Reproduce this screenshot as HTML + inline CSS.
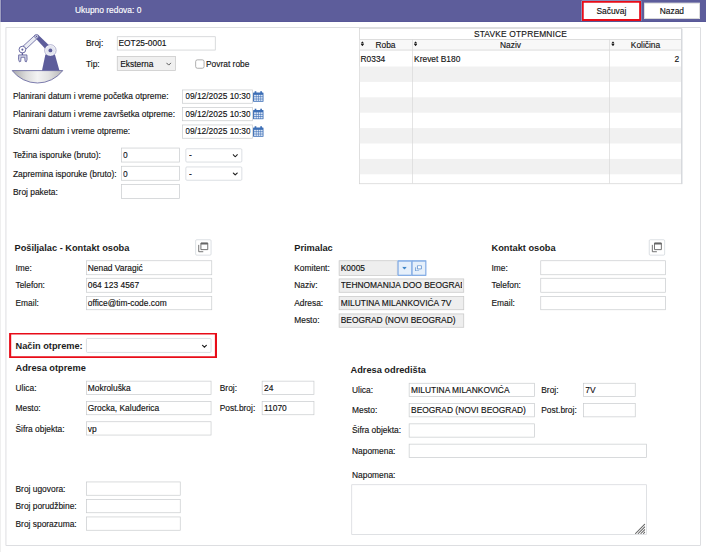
<!DOCTYPE html>
<html><head><meta charset="utf-8">
<style>
*{box-sizing:border-box;margin:0;padding:0}
html,body{width:706px;height:552px;overflow:hidden;background:#fff}
body{font-family:"Liberation Sans",sans-serif;color:#1c1c1c}
#w{position:absolute;left:0;top:0;width:1008.57px;height:788.57px;transform:scale(0.7);transform-origin:0 0}
.a{position:absolute;white-space:nowrap}
.l{font-size:12px;line-height:18px;height:18px;color:#151515;-webkit-text-stroke:0.2px}
.t{color:#111;overflow:hidden}
.h{font-size:13.2px;line-height:19px;height:19px;font-weight:bold;color:#1c1c1c}
.i{border:1px solid #c8cbce;background:#fff}
.g{background:#eeeeee;border-color:#c9c9c9}
.s{border-radius:3px}
</style></head><body><div id="w">
<div class="a" style="left:0.0px;top:0.0px;width:1.43px;height:788.57px;background:#e8e8e8"></div>
<div class="a" style="left:1.43px;top:0.0px;width:1007.14px;height:31.43px;background:#5d5d9b;border-bottom:1px solid #43438a;border-left:1px solid #4a4a90"></div>
<div class="a l" style="left:107.14px;top:6px;color:#fff">Ukupno redova: 0</div>
<div class="a" style="left:831.29px;top:1.29px;width:84.29px;height:28.43px;background:#fff;box-shadow:inset 0 0 0 2.9px #e80c18"></div>
<div class="a l" style="left:831.29px;top:7px;width:84.29px;text-align:center;color:#111">Sačuvaj</div>
<div class="a" style="left:919.64px;top:4.29px;width:80.36px;height:22.86px;background:#fff;border:1px solid #cfcfcf"></div>
<div class="a l" style="left:919.64px;top:7px;width:80.36px;text-align:center;color:#111">Nazad</div>
<div class="a" style="left:8.14px;top:38.86px;width:993.14px;height:741.57px;border:1px solid #cfd1d4;background:#fff"></div>
<svg class="a" style="left:15.71px;top:47.14px" width="75.71" height="75.71" viewBox="0 0 53 53"><defs><linearGradient id="bg" x1="0" x2="1"><stop offset="0" stop-color="#a9a9a9"/><stop offset=".28" stop-color="#dcdcdc"/><stop offset=".5" stop-color="#f3f3f3"/><stop offset=".72" stop-color="#e2e2e2"/><stop offset="1" stop-color="#b6b6b6"/></linearGradient></defs><path d="M1 37.7 H51.6 A32 32 0 0 1 1 37.7 Z" fill="url(#bg)" stroke="#5d5d9b" stroke-width="0.8"/><path d="M30.8 37.7 L34.2 21.5 H43.7 L48.2 37.7 Z" fill="#5d5d9b"/><path d="M26.9 1.9 L41.2 15.6 L37.2 19.4 L23.9 4.9 Z" fill="#5d5d9b"/><path d="M26.8 4.9 L24.1 2.0 L9.8 15.2 L12.6 18.2 Z" fill="#e9ebf3" stroke="#5d5d9b" stroke-width="0.8"/><circle cx="25.4" cy="3.5" r="1.9" fill="#e9ebf3" stroke="#5d5d9b" stroke-width="0.8"/><circle cx="25.4" cy="3.5" r="0.8" fill="#5d5d9b"/><circle cx="39.2" cy="17.5" r="5.7" fill="#fff" stroke="#5d5d9b" stroke-width="0.5"/><circle cx="39.2" cy="17.5" r="4.7" fill="#e3e5ef"/><circle cx="39.2" cy="17.5" r="1.9" fill="#5d5d9b"/><circle cx="11.2" cy="16.7" r="3.35" fill="#fff" stroke="#5d5d9b" stroke-width="0.9"/><circle cx="11.2" cy="16.7" r="1.05" fill="#5d5d9b"/><path d="M11.2 19.9 V22.2" stroke="#5d5d9b" stroke-width="1.3" fill="none"/><path d="M7.5 22 H15.7 L15.9 26.6 L15.1 29 L13.9 28.5 L13.5 24.4 H9.9 L9.5 28.5 L8.3 29 L7.3 26.6 Z" fill="#cfd1e3" stroke="#5d5d9b" stroke-width="0.8" stroke-linejoin="round"/></svg>
<div class="a l" style="left:122.86px;top:53px;">Broj:</div>
<div class="a l" style="left:122.86px;top:83px;">Tip:</div>
<div class="a i" style="left:167.14px;top:51.79px;width:141.07px;height:20.36px;"></div>
<div class="a l t" style="left:169.14px;top:53px;width:135.87px">EOT25-0001</div>
<div class="a i s" style="left:167.14px;top:80.0px;width:84.29px;height:21.43px;background:#f0f0f0;border-color:#c6c6c6;border-radius:0"><svg class="a" style="right:5.2px;top:50%;margin-top:-1.7px" width="8.1" height="5" viewBox="0 0 7.4 4.6"><path d="M0.6 0.6 L3.7 3.7 L6.8 0.6" fill="none" stroke="#444" stroke-width="1.15"/></svg></div>
<div class="a l t" style="left:171.74px;top:83px;width:76.49px">Eksterna</div>
<div class="a" style="left:278.57px;top:84.71px;width:13.29px;height:13.57px;border:1px solid #8c8c8c;border-radius:3px;background:#fff"></div>
<div class="a l" style="left:294.29px;top:83px;">Povrat robe</div>
<div class="a l" style="left:18.57px;top:128px;">Planirani datum i vreme početka otpreme:</div>
<div class="a i" style="left:260.36px;top:127.5px;width:100.36px;height:20.5px;"></div>
<div class="a l t" style="left:264.66px;top:128px;width:92.86px">09/12/2025 10:30</div>
<div class="a" style="left:360.86px;top:129.29px"><svg width="16" height="17" viewBox="0 0 16 17"><rect x="0.5" y="3" width="15" height="13.5" rx="1" fill="#3d6fb6"/><rect x="2.8" y="1.3" width="2.4" height="3" fill="#3d6fb6"/><rect x="10.8" y="1.3" width="2.4" height="3" fill="#3d6fb6"/><g fill="#dfe9f7"><rect x="2" y="6.5" width="2.6" height="2.3"/><rect x="5.3" y="6.5" width="2.6" height="2.3"/><rect x="8.6" y="6.5" width="2.6" height="2.3"/><rect x="11.9" y="6.5" width="2.3" height="2.3"/><rect x="2" y="9.7" width="2.6" height="2.3"/><rect x="5.3" y="9.7" width="2.6" height="2.3"/><rect x="8.6" y="9.7" width="2.6" height="2.3"/><rect x="11.9" y="9.7" width="2.3" height="2.3"/><rect x="2" y="12.9" width="2.6" height="2.3"/><rect x="5.3" y="12.9" width="2.6" height="2.3"/><rect x="8.6" y="12.9" width="2.6" height="2.3"/><rect x="11.9" y="12.9" width="2.3" height="2.3"/></g></svg></div>
<div class="a l" style="left:18.57px;top:154px;">Planirani datum i vreme završetka otpreme:</div>
<div class="a i" style="left:260.36px;top:152.5px;width:100.36px;height:20.5px;"></div>
<div class="a l t" style="left:264.66px;top:154px;width:92.86px">09/12/2025 10:30</div>
<div class="a" style="left:360.86px;top:154.29px"><svg width="16" height="17" viewBox="0 0 16 17"><rect x="0.5" y="3" width="15" height="13.5" rx="1" fill="#3d6fb6"/><rect x="2.8" y="1.3" width="2.4" height="3" fill="#3d6fb6"/><rect x="10.8" y="1.3" width="2.4" height="3" fill="#3d6fb6"/><g fill="#dfe9f7"><rect x="2" y="6.5" width="2.6" height="2.3"/><rect x="5.3" y="6.5" width="2.6" height="2.3"/><rect x="8.6" y="6.5" width="2.6" height="2.3"/><rect x="11.9" y="6.5" width="2.3" height="2.3"/><rect x="2" y="9.7" width="2.6" height="2.3"/><rect x="5.3" y="9.7" width="2.6" height="2.3"/><rect x="8.6" y="9.7" width="2.6" height="2.3"/><rect x="11.9" y="9.7" width="2.3" height="2.3"/><rect x="2" y="12.9" width="2.6" height="2.3"/><rect x="5.3" y="12.9" width="2.6" height="2.3"/><rect x="8.6" y="12.9" width="2.6" height="2.3"/><rect x="11.9" y="12.9" width="2.3" height="2.3"/></g></svg></div>
<div class="a l" style="left:18.57px;top:178px;">Stvarni datum i vreme otpreme:</div>
<div class="a i" style="left:260.36px;top:177.5px;width:100.36px;height:20.5px;"></div>
<div class="a l t" style="left:264.66px;top:178px;width:92.86px">09/12/2025 10:30</div>
<div class="a" style="left:360.86px;top:179.29px"><svg width="16" height="17" viewBox="0 0 16 17"><rect x="0.5" y="3" width="15" height="13.5" rx="1" fill="#3d6fb6"/><rect x="2.8" y="1.3" width="2.4" height="3" fill="#3d6fb6"/><rect x="10.8" y="1.3" width="2.4" height="3" fill="#3d6fb6"/><g fill="#dfe9f7"><rect x="2" y="6.5" width="2.6" height="2.3"/><rect x="5.3" y="6.5" width="2.6" height="2.3"/><rect x="8.6" y="6.5" width="2.6" height="2.3"/><rect x="11.9" y="6.5" width="2.3" height="2.3"/><rect x="2" y="9.7" width="2.6" height="2.3"/><rect x="5.3" y="9.7" width="2.6" height="2.3"/><rect x="8.6" y="9.7" width="2.6" height="2.3"/><rect x="11.9" y="9.7" width="2.3" height="2.3"/><rect x="2" y="12.9" width="2.6" height="2.3"/><rect x="5.3" y="12.9" width="2.6" height="2.3"/><rect x="8.6" y="12.9" width="2.6" height="2.3"/><rect x="11.9" y="12.9" width="2.3" height="2.3"/></g></svg></div>
<div class="a l" style="left:18.57px;top:213px;">Težina isporuke (bruto):</div>
<div class="a i" style="left:172.86px;top:211.43px;width:84.29px;height:20.57px;"></div>
<div class="a l t" style="left:175.76px;top:213px;width:78.19px">0</div>
<div class="a i s" style="left:265.0px;top:211.71px;width:81.43px;height:20.71px;border-radius:2px;border-color:#cdd1d7"><svg class="a" style="right:5.0px;top:50%;margin-top:-1.7px" width="8.1" height="5" viewBox="0 0 7.4 4.6"><path d="M0.6 0.6 L3.7 3.7 L6.8 0.6" fill="none" stroke="#222" stroke-width="1.5"/></svg></div>
<div class="a l t" style="left:270.0px;top:213px;width:73.23px">-</div>
<div class="a l" style="left:18.57px;top:240px;">Zapremina isporuke (bruto):</div>
<div class="a i" style="left:172.86px;top:237.43px;width:84.29px;height:20.57px;"></div>
<div class="a l t" style="left:175.76px;top:240px;width:78.19px">0</div>
<div class="a i s" style="left:265.0px;top:237.71px;width:81.43px;height:20.71px;border-radius:2px;border-color:#cdd1d7"><svg class="a" style="right:5.0px;top:50%;margin-top:-1.7px" width="8.1" height="5" viewBox="0 0 7.4 4.6"><path d="M0.6 0.6 L3.7 3.7 L6.8 0.6" fill="none" stroke="#222" stroke-width="1.5"/></svg></div>
<div class="a l t" style="left:270.0px;top:240px;width:73.23px">-</div>
<div class="a l" style="left:18.57px;top:266px;">Broj paketa:</div>
<div class="a i" style="left:172.86px;top:263.43px;width:84.29px;height:20.57px;"></div>
<div class="a h" style="left:20.71px;top:345px;">Pošiljalac - Kontakt osoba</div>
<div class="a" style="left:278.57px;top:341.71px;width:23.57px;height:23.57px;border:1px solid #cdd2d9;border-radius:2px;background:#fff"><svg width="24" height="24" viewBox="0 0 24 24" style="position:absolute;left:-1px;top:-1px"><path d="M8 5.2 H17.8 V14.6 H8 Z" fill="none" stroke="#666" stroke-width="1.3"/><path d="M8 6 H17.8" stroke="#666" stroke-width="2.4"/><path d="M4.9 7.8 V17.6 H11.4" fill="none" stroke="#666" stroke-width="1.3"/></svg></div>
<div class="a l" style="left:22.14px;top:374px;">Ime:</div>
<div class="a i" style="left:122.5px;top:372.29px;width:180.0px;height:20.43px;"></div>
<div class="a l t" style="left:125.4px;top:374px;width:173.9px">Nenad Varagić</div>
<div class="a l" style="left:22.14px;top:398px;">Telefon:</div>
<div class="a i" style="left:122.5px;top:397.43px;width:180.0px;height:20.43px;"></div>
<div class="a l t" style="left:125.4px;top:398px;width:173.9px">064 123 4567</div>
<div class="a l" style="left:22.14px;top:424px;">Email:</div>
<div class="a i" style="left:122.5px;top:422.57px;width:180.0px;height:20.43px;"></div>
<div class="a l t" style="left:125.4px;top:424px;width:173.9px">office@tim-code.com</div>
<div class="a h" style="left:420.36px;top:345px;">Primalac</div>
<div class="a l" style="left:420.36px;top:374px;">Komitent:</div>
<div class="a i g" style="left:484.29px;top:372.14px;width:83.57px;height:21.57px;"></div>
<div class="a l t" style="left:486.69px;top:374px;width:77.97px">K0005</div>
<div class="a l" style="left:420.36px;top:398px;">Naziv:</div>
<div class="a i g" style="left:484.29px;top:397.71px;width:178.93px;height:20.57px;"></div>
<div class="a l t" style="left:486.69px;top:398px;width:173.33px">TEHNOMANIJA DOO BEOGRAD</div>
<div class="a l" style="left:420.36px;top:424px;">Adresa:</div>
<div class="a i g" style="left:484.29px;top:422.57px;width:178.93px;height:20.57px;"></div>
<div class="a l t" style="left:486.69px;top:424px;width:173.33px">MILUTINA MILANKOVIĆA 7V</div>
<div class="a l" style="left:420.36px;top:448px;">Mesto:</div>
<div class="a i g" style="left:484.29px;top:447.57px;width:178.93px;height:20.57px;"></div>
<div class="a l t" style="left:486.69px;top:448px;width:173.33px">BEOGRAD (NOVI BEOGRAD)</div>
<div class="a" style="left:567.5px;top:372.29px;width:21.07px;height:21.43px;background:#e6f0fb;border:1px solid #5d92dd;box-shadow:inset 0 0 0 0.4px #6b9ce0"><svg width="7.6" height="4.2" viewBox="0 0 8 5" style="position:absolute;left:5.7px;top:7.8px"><path d="M0 0 H8 L4 5 Z" fill="#3f86c8"/></svg></div>
<div class="a" style="left:587.86px;top:372.29px;width:21.43px;height:21.43px;background:#e6f0fb;border:1px solid #5d92dd;box-shadow:inset 0 0 0 0.4px #6b9ce0"><svg width="9.5" height="8.5" viewBox="0 0 10 9" style="position:absolute;left:4.5px;top:5.5px"><path d="M3.5 0.5 H9.5 V5.5 H3.5 Z" fill="#fff" stroke="#3b78c4" stroke-width="1"/><path d="M0.5 3 V8.5 H6" fill="none" stroke="#3b78c4" stroke-width="1"/></svg></div>
<div class="a h" style="left:702.14px;top:345px;">Kontakt osoba</div>
<div class="a" style="left:926.57px;top:341.71px;width:23.86px;height:23.57px;border:1px solid #cdd2d9;border-radius:2px;background:#fff"><svg width="24" height="24" viewBox="0 0 24 24" style="position:absolute;left:-1px;top:-1px"><path d="M8 5.2 H17.8 V14.6 H8 Z" fill="none" stroke="#666" stroke-width="1.3"/><path d="M8 6 H17.8" stroke="#666" stroke-width="2.4"/><path d="M4.9 7.8 V17.6 H11.4" fill="none" stroke="#666" stroke-width="1.3"/></svg></div>
<div class="a l" style="left:702.14px;top:374px;">Ime:</div>
<div class="a i" style="left:771.79px;top:372.29px;width:178.93px;height:20.43px;"></div>
<div class="a l" style="left:702.14px;top:398px;">Telefon:</div>
<div class="a i" style="left:771.79px;top:397.43px;width:178.93px;height:20.43px;"></div>
<div class="a l" style="left:702.14px;top:424px;">Email:</div>
<div class="a i" style="left:771.79px;top:422.57px;width:178.93px;height:20.43px;"></div>
<div class="a" style="left:12.71px;top:475.43px;width:297.29px;height:37.0px;box-shadow:inset 0 0 0 3px #e80c18"></div>
<div class="a h" style="left:22.14px;top:485px;">Način otpreme:</div>
<div class="a i s" style="left:122.5px;top:482.86px;width:179.29px;height:20.86px;border-radius:2px;border-color:#cdd1d7"><svg class="a" style="right:5.0px;top:50%;margin-top:-1.7px" width="8.1" height="5" viewBox="0 0 7.4 4.6"><path d="M0.6 0.6 L3.7 3.7 L6.8 0.6" fill="none" stroke="#222" stroke-width="1.5"/></svg></div>
<div class="a h" style="left:22.14px;top:516px;">Adresa otpreme</div>
<div class="a l" style="left:22.14px;top:546px;">Ulica:</div>
<div class="a i" style="left:122.5px;top:543.71px;width:179.29px;height:20.43px;"></div>
<div class="a l t" style="left:125.4px;top:546px;width:173.19px">Mokroluška</div>
<div class="a l" style="left:22.14px;top:574px;">Mesto:</div>
<div class="a i" style="left:122.5px;top:572.86px;width:179.29px;height:20.43px;"></div>
<div class="a l t" style="left:125.4px;top:574px;width:173.19px">Grocka, Kaluđerica</div>
<div class="a l" style="left:22.14px;top:604px;">Šifra objekta:</div>
<div class="a i" style="left:122.5px;top:602.0px;width:179.29px;height:20.43px;"></div>
<div class="a l t" style="left:125.4px;top:604px;width:173.19px">vp</div>
<div class="a l" style="left:313.93px;top:546px;">Broj:</div>
<div class="a i" style="left:374.29px;top:543.71px;width:75.0px;height:20.43px;"></div>
<div class="a l t" style="left:377.19px;top:546px;width:68.9px">24</div>
<div class="a l" style="left:313.93px;top:574px;">Post.broj:</div>
<div class="a i" style="left:374.29px;top:572.86px;width:75.0px;height:20.43px;"></div>
<div class="a l t" style="left:377.19px;top:574px;width:68.9px">11070</div>
<div class="a l" style="left:22.14px;top:690px;">Broj ugovora:</div>
<div class="a i" style="left:122.5px;top:688.0px;width:135.36px;height:20.43px;"></div>
<div class="a l" style="left:22.14px;top:714px;">Broj porudžbine:</div>
<div class="a i" style="left:122.5px;top:713.0px;width:135.36px;height:20.43px;"></div>
<div class="a l" style="left:22.14px;top:740px;">Broj sporazuma:</div>
<div class="a i" style="left:122.5px;top:738.0px;width:135.36px;height:20.43px;"></div>
<div class="a h" style="left:500.71px;top:519px;">Adresa odredišta</div>
<div class="a l" style="left:502.86px;top:548px;">Ulica:</div>
<div class="a i" style="left:584.29px;top:546.86px;width:179.29px;height:20.43px;"></div>
<div class="a l t" style="left:587.19px;top:548px;width:173.19px">MILUTINA MILANKOVIĆA</div>
<div class="a l" style="left:502.86px;top:577px;">Mesto:</div>
<div class="a i" style="left:584.29px;top:575.86px;width:179.29px;height:20.43px;"></div>
<div class="a l t" style="left:587.19px;top:577px;width:173.19px">BEOGRAD (NOVI BEOGRAD)</div>
<div class="a l" style="left:502.86px;top:606px;">Šifra objekta:</div>
<div class="a i" style="left:584.29px;top:604.86px;width:179.29px;height:20.43px;"></div>
<div class="a l" style="left:502.86px;top:636px;">Napomena:</div>
<div class="a i" style="left:584.29px;top:633.71px;width:339.64px;height:20.43px;"></div>
<div class="a l" style="left:773.21px;top:548px;">Broj:</div>
<div class="a i" style="left:833.21px;top:546.86px;width:75.0px;height:20.43px;"></div>
<div class="a l t" style="left:836.11px;top:548px;width:68.9px">7V</div>
<div class="a l" style="left:773.21px;top:577px;">Post.broj:</div>
<div class="a i" style="left:833.21px;top:575.86px;width:75.0px;height:20.43px;"></div>
<div class="a l" style="left:502.86px;top:670px;">Napomena:</div>
<div class="a" style="left:501.79px;top:692.0px;width:421.93px;height:72.0px;border:1px solid #d2d5d9;background:#fff"><svg width="15" height="15" viewBox="0 0 15 15" style="position:absolute;right:0.5px;bottom:0px"><path d="M14.5 0.5 L0.5 14.5 M14.5 4.3 L4.3 14.5 M14.5 8.1 L8.1 14.5 M14.5 11.9 L11.9 14.5" stroke="#666" stroke-width="1.5"/></svg></div>
<div class="a" style="left:512.86px;top:40.29px;width:461.43px;height:222.86px;border:1px solid #d2d2d2;background:#fff"></div>
<div class="a" style="left:513.86px;top:56.14px;width:459.43px;height:16.14px;background:#f8f8f8;border-top:1px solid #d2d2d2;border-bottom:1px solid #d2d2d2"></div>
<div class="a" style="left:513.86px;top:94.71px;width:459.43px;height:22.0px;background:#f1f1f1"></div>
<div class="a" style="left:513.86px;top:138.71px;width:459.43px;height:22.0px;background:#f1f1f1"></div>
<div class="a" style="left:513.86px;top:182.71px;width:459.43px;height:22.0px;background:#f1f1f1"></div>
<div class="a" style="left:513.86px;top:226.71px;width:459.43px;height:22.0px;background:#f1f1f1"></div>
<div class="a" style="left:588.57px;top:56.14px;width:1.29px;height:206.14px;background:#d8d8d8"></div>
<div class="a" style="left:870.0px;top:56.14px;width:1.29px;height:206.14px;background:#d8d8d8"></div>
<div class="a" style="left:972.86px;top:41.43px;width:2.57px;height:221.71px;background:#d6d9dd"></div>
<div class="a l" style="left:512.86px;top:40px;width:461.43px;text-align:center;font-size:12px;letter-spacing:0.25px">STAVKE OTPREMNICE</div>
<div class="a l" style="left:512.86px;top:56px;width:75.71px;text-align:center">Roba</div>
<div class="a l" style="left:588.57px;top:56px;width:281.43px;text-align:center">Naziv</div>
<div class="a l" style="left:870.0px;top:56px;width:104.29px;text-align:center">Količina</div>
<div class="a" style="left:515.14px;top:58.71px;line-height:0"><svg width="5.4" height="7.2" viewBox="0 0 6 9"><path d="M3 0 L6 4.1 H0 Z M3 9 L6 4.9 H0 Z" fill="#1a1a1a"/></svg></div>
<div class="a" style="left:590.71px;top:58.71px;line-height:0"><svg width="5.4" height="7.2" viewBox="0 0 6 9"><path d="M3 0 L6 4.1 H0 Z M3 9 L6 4.9 H0 Z" fill="#1a1a1a"/></svg></div>
<div class="a" style="left:872.86px;top:58.71px;line-height:0"><svg width="5.4" height="7.2" viewBox="0 0 6 9"><path d="M3 0 L6 4.1 H0 Z M3 9 L6 4.9 H0 Z" fill="#1a1a1a"/></svg></div>
<div class="a l" style="left:515.0px;top:76px;">R0334</div>
<div class="a l" style="left:591.57px;top:76px;">Krevet B180</div>
<div class="a l" style="left:870.0px;top:76px;width:100.43px;text-align:right">2</div>
</div></body></html>
